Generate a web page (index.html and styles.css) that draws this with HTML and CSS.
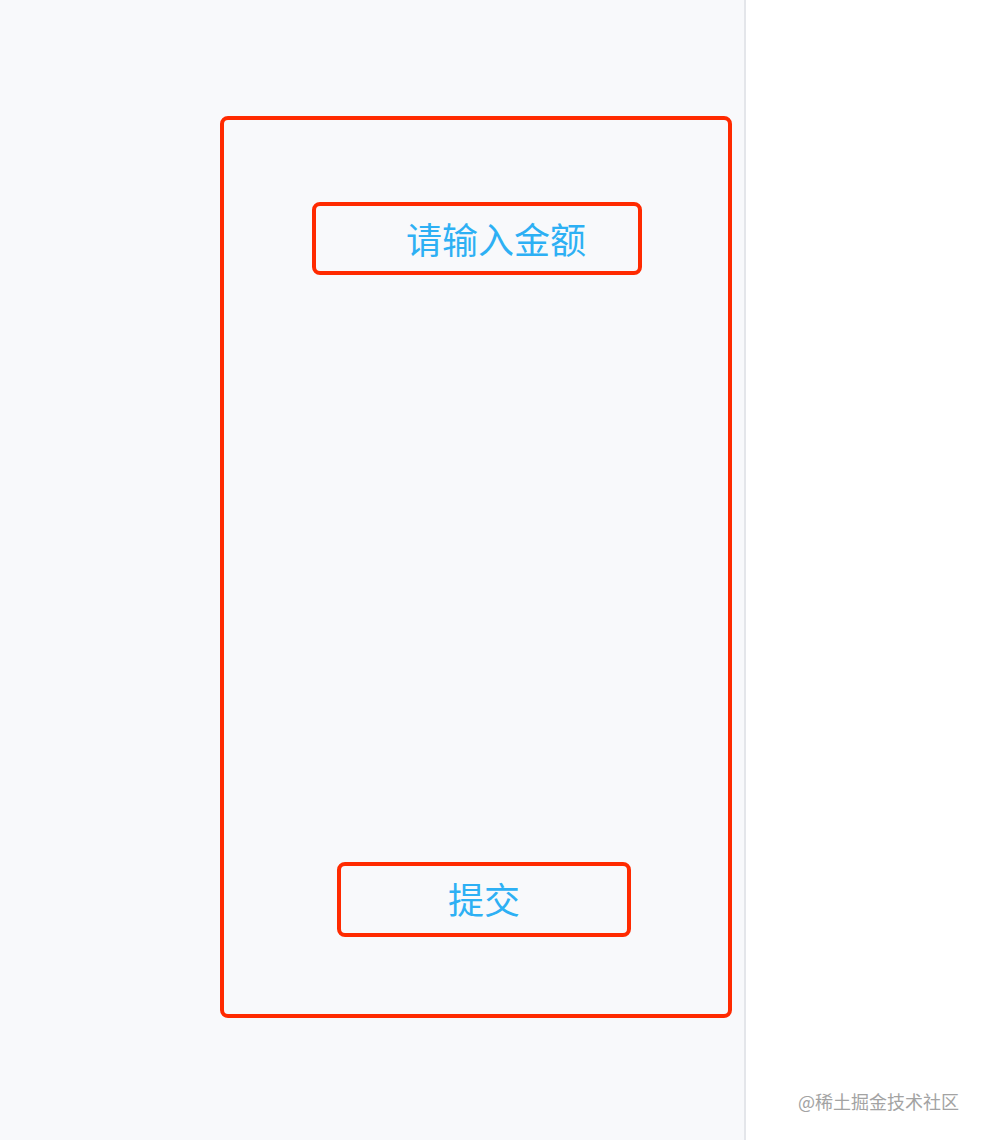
FILE: index.html
```html
<!DOCTYPE html>
<html lang="zh-CN">
<head>
<meta charset="utf-8">
<title>充值</title>
<link rel="stylesheet" href="styles.css">
</head>
<body>
<div class="page">
  <main class="panel">
    <form class="card">
      <div class="amount-field"><span class="placeholder">请输入金额</span></div>
      <button type="button" class="submit">提交</button>
    </form>
  </main>
  <aside class="side">
    <span class="watermark">@稀土掘金技术社区</span>
  </aside>
</div>
</body>
</html>
```

FILE: styles.css
```css
html, body {
  margin: 0;
  padding: 0;
  height: 100%;
}

body {
  font-family: "Noto Sans CJK SC", "Noto Sans", sans-serif;
  background: #ffffff;
}

.page {
  display: flex;
  height: 1140px;
}

.panel {
  width: 746px;
  flex: none;
  background: #f8f9fb;
  border-right: 2px solid #e4e6ea;
  padding: 116px 0 0 220px;
  box-sizing: border-box;
}

.card {
  width: 512px;
  height: 902px;
  box-sizing: border-box;
  border: 4px solid #ff2a00;
  border-radius: 8px;
  display: flex;
  flex-direction: column;
  align-items: flex-start;
  padding-top: 82px;
  margin: 0;
}

.amount-field {
  margin-left: 88px;
  width: 330px;
  height: 73px;
  box-sizing: border-box;
  border: 4px solid #ff2a00;
  border-radius: 8px;
  display: flex;
  align-items: center;
  padding-left: 90px;
  padding-bottom: 2px;
}

.placeholder {
  font-size: 36px;
  line-height: 1;
  color: #2db0f4;
  letter-spacing: 0;
}

.submit {
  margin-top: auto;
  margin-left: 113px;
  margin-bottom: 77px;
  width: 294px;
  height: 75px;
  box-sizing: border-box;
  border: 4px solid #ff2a00;
  border-radius: 8px;
  background: transparent;
  font-family: inherit;
  font-size: 36px;
  line-height: 1;
  color: #2db0f4;
  padding: 0 0 4px 0;
}

.side {
  flex: 1;
  display: flex;
  align-items: flex-end;
  padding: 0 0 30px 52px;
}

.watermark {
  font-size: 18px;
  line-height: 1;
  color: #a3a3a3;
  white-space: nowrap;
}
```
